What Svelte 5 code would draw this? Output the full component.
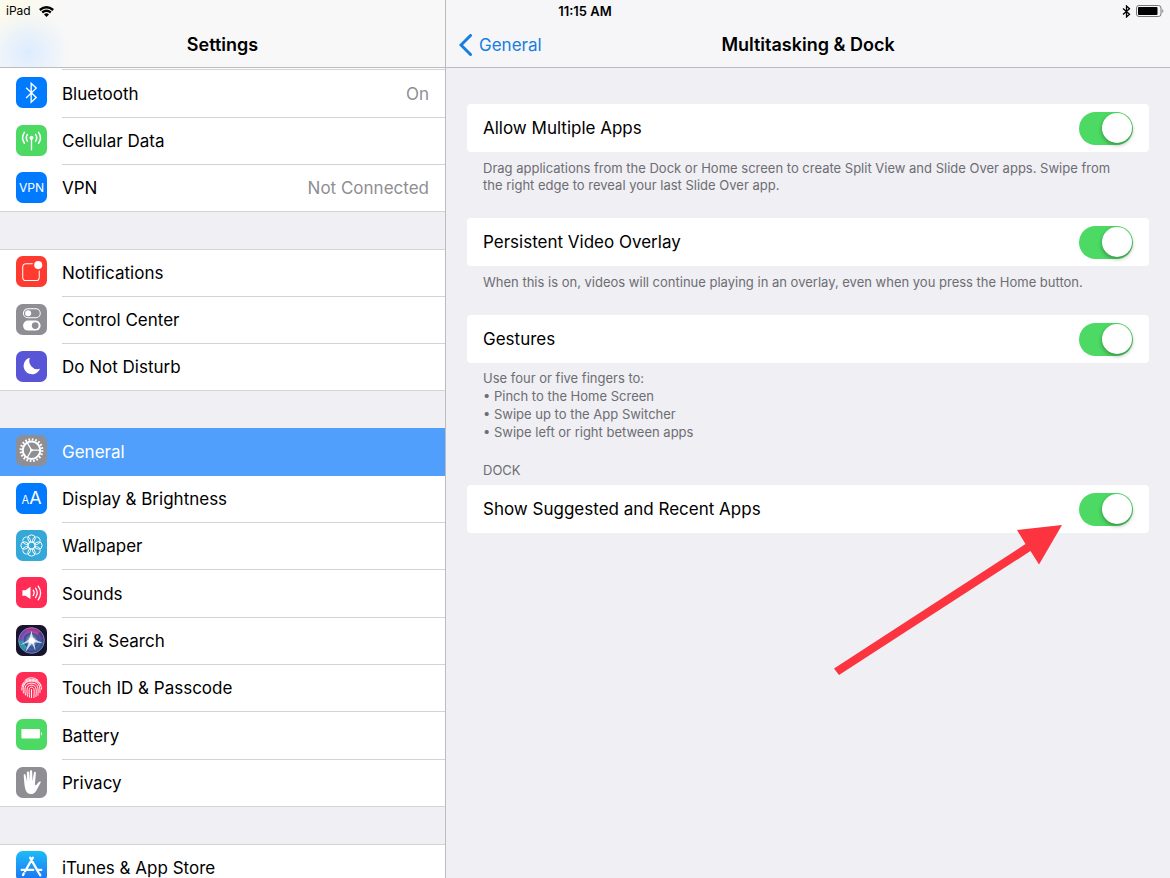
<script>
  const groups = [
    [
      { icon: 'bluetooth', label: 'Bluetooth', value: 'On', color: '#007aff' },
      { icon: 'cellular', label: 'Cellular Data', color: '#4cd964' },
      { icon: 'vpn', label: 'VPN', value: 'Not Connected', color: '#007aff' }
    ],
    [
      { icon: 'notifications', label: 'Notifications', color: '#ff3b30' },
      { icon: 'control', label: 'Control Center', color: '#8e8e93' },
      { icon: 'moon', label: 'Do Not Disturb', color: '#5856d6' }
    ],
    [
      { icon: 'gear', label: 'General', color: '#8e8e93', selected: true },
      { icon: 'display', label: 'Display & Brightness', color: '#007aff' },
      { icon: 'wallpaper', label: 'Wallpaper', color: '#34a8d8' },
      { icon: 'sounds', label: 'Sounds', color: '#ff2d55' },
      { icon: 'siri', label: 'Siri & Search', color: '#17142e' },
      { icon: 'touch', label: 'Touch ID & Passcode', color: '#ff2d55' },
      { icon: 'battery', label: 'Battery', color: '#4cd964' },
      { icon: 'hand', label: 'Privacy', color: '#8e8e93' }
    ],
    [{ icon: 'store', label: 'iTunes & App Store', color: 'url(#store-fill)' }]
  ];

  const petals = [0, 45, 90, 135, 180, 225, 270, 315];

  let multiple = $state(true);
  let overlay = $state(true);
  let gestures = $state(true);
  let suggested = $state(true);
</script>

<svelte:head><title>Settings</title></svelte:head>

{#snippet glyph(name)}
  {#if name === 'bluetooth'}
    <path d="M30 32 60 61 45 75V19L60 33 30 62" fill="none" stroke="#fff" stroke-width="4" />
  {:else if name === 'cellular'}
    <circle cx="46" cy="38" r="6" fill="#fff" />
    <path d="M46 40V75" stroke="#fff" stroke-width="4" />
    <g fill="none" stroke="#fff" stroke-width="4.5" stroke-linecap="round">
      <path d="M34 28Q27 38 34 48M58 28Q65 38 58 48M25 22Q14 38 25 54M67 22Q78 38 67 54" />
    </g>
  {:else if name === 'vpn'}
    <text x="46" y="59" font-size="36" text-anchor="middle" fill="#fff">VPN</text>
  {:else if name === 'notifications'}
    <rect x="20" y="23" width="49" height="50" rx="10" fill="none" stroke="#fff" stroke-width="3" />
    <circle cx="66" cy="27" r="17" fill="#ff3b30" />
    <circle cx="66" cy="27" r="12" fill="#fff" />
  {:else if name === 'control'}
    <rect x="22" y="14" width="50" height="27" rx="13.5" fill="none" stroke="#fff" stroke-width="3" />
    <circle cx="36" cy="27.5" r="9" fill="#fff" />
    <rect x="21" y="49" width="52" height="30" rx="15" fill="#fff" />
    <circle cx="57" cy="64" r="10" fill="#8e8e93" />
  {:else if name === 'moon'}
    <path d="M41 20A25 25 0 1 0 71 53A25 25 0 0 1 41 20Z" fill="#fff" />
  {:else if name === 'gear'}
    <circle cx="46" cy="45" r="32" fill="none" stroke="#fff" stroke-width="7" stroke-dasharray="5 5.05" />
    <circle cx="46" cy="45" r="26" fill="none" stroke="#fff" stroke-width="6" />
    <path d="M46 45H72M46 45 33 22M46 45 33 68" stroke="#fff" stroke-width="3.5" />
    <circle cx="46" cy="45" r="4" fill="#fff" />
  {:else if name === 'display'}
    <text x="16" y="61" font-size="33" fill="#fff">A</text>
    <text x="39" y="61" font-size="53" fill="#fff">A</text>
  {:else if name === 'wallpaper'}
    <g fill="none" stroke="#fff" stroke-width="2.8">
      {#each petals as angle}
        <circle cx="46" cy="25.5" r="11" transform="rotate({angle} 46 46)" />
      {/each}
      <circle cx="46" cy="46" r="11" />
    </g>
  {:else if name === 'sounds'}
    <path d="M19 39H28L43 29V65L28 56H19Z" fill="#fff" />
    <path d="M51 39Q57 47 51 55M58 33Q68 47 58 61M66 27Q80 47 66 68" fill="none" stroke="#fff" stroke-width="3.8" stroke-linecap="round" />
  {:else if name === 'siri'}
    <circle cx="46" cy="46" r="39" fill="#25214f" />
    <g fill="none" stroke-width="15">
      <path d="M15 47A31 31 0 0 1 35 17" stroke="#8b4cc6" />
      <path d="M30 19A31 31 0 0 1 69 26" stroke="#d53593" />
      <path d="M68 24A31 31 0 0 1 77 50" stroke="#593b95" />
      <path d="M77 48A31 31 0 0 1 57 75" stroke="#265f95" />
      <path d="M57 75A31 31 0 0 1 27 70" stroke="#3b4e9c" />
      <path d="M29 72A31 31 0 0 1 15 46" stroke="#20b9bd" />
    </g>
    <circle cx="46" cy="46" r="38" fill="url(#siri-glow)" />
    <path d="M46 17 51 40 80 54 54 51 58 77 47 54 27 82 38 51 13 59 39 42Z" fill="#d7efff" fill-opacity=".9" />
    <circle cx="47" cy="46" r="9" fill="#fff" />
    <circle cx="46" cy="46" r="38" fill="none" stroke="#a596ba" stroke-width="2" />
  {:else if name === 'touch'}
    <g fill="none" stroke="#fff" stroke-width="2.8" stroke-linecap="round">
      <path d="M27 24Q46 9 65 24M18 40C25 15 67 15 74 40M17 53C16 15 76 15 76 51M22 62C20 49 20 27 46 27C71 27 72 47 71 61M28 68C26 55 22 33 46 33C69 33 66 53 65 69M34 72C33 61 28 39 46 39C64 39 60 60 59 73M40 75C40 65 35 45 46 45C58 45 53 65 53 76M46 52V76" />
    </g>
  {:else if name === 'battery'}
    <rect x="16" y="30" width="55" height="28" rx="3" fill="#fff" />
    <path d="M74 38Q80 44 74 50Z" fill="#fff" />
  {:else if name === 'hand'}
    <path d="M34 77C27 70 27 62 25 52L23 27Q22 22 25 21Q28 21 29 26L33 44 32 17Q32 13 35 13Q39 13 39 17L41 42V14Q41 10 45 10Q48 10 48 14L49 42 53 18Q54 13 57 14Q60 15 59 20L56 52 59 55 67 45Q71 41 74 44Q73 48 70 52L62 67Q57 79 48 80Q39 81 34 77Z" fill="#fff" />
  {:else if name === 'store'}
    <g fill="none" stroke="#fff" stroke-width="7" stroke-linecap="round">
      <path d="M50 20 27 60M42 20 66 62M17 56H51M63 56H75M23 67 21 71M69 67 72 72" />
    </g>
  {/if}
{/snippet}

{#snippet settingSwitch(id, label, get, set)}
  <div class="card">
    <label for={id}>{label}</label>
    <input {id} type="checkbox" role="switch" checked={get()} onchange={(e) => set(e.currentTarget.checked)} />
  </div>
{/snippet}

<svg class="defs" width="0" height="0" aria-hidden="true">
  <defs>
    <linearGradient id="store-fill" x1="0" y1="0" x2="0" y2="1">
      <stop offset="0" stop-color="#1cbcf8" />
      <stop offset="1" stop-color="#1d6ff2" />
    </linearGradient>
    <radialGradient id="siri-glow">
      <stop offset="0" stop-color="#fff" stop-opacity=".9" />
      <stop offset=".5" stop-color="#78a6ef" stop-opacity=".4" />
      <stop offset="1" stop-color="#20205e" stop-opacity=".3" />
    </radialGradient>
  </defs>
</svg>

<div class="app">
  <div class="status">
    <div class="carrier">
      <span>iPad</span>
      <svg width="15" height="11" viewBox="0 0 15 11" aria-hidden="true">
        <path d="M.8 4Q7.500-1.500 14.200 4M3.200 6.500Q7.500 3 11.800 6.500" fill="none" stroke="#000" stroke-width="2.400" />
        <path d="M5 8.400Q7.500 6.300 10 8.400L7.500 11Z" />
      </svg>
    </div>
    <time>11:15 AM</time>
    <div class="power">
      <svg width="9" height="13" viewBox="0 0 9 13" aria-hidden="true">
        <path d="M1 3.500 7.500 9.300 4.500 12V1L7.500 3.700 1 9.500" fill="none" stroke="#000" stroke-width="1.300" />
      </svg>
      <svg width="28" height="12" viewBox="0 0 28 12" aria-hidden="true">
        <rect x=".5" y=".5" width="24.500" height="11" rx="2.500" fill="none" stroke="#777" />
        <rect x="2" y="2" width="19.500" height="8" rx="1" />
        <path d="M26.300 4Q28.500 6 26.300 8Z" fill="#777" />
      </svg>
    </div>
  </div>

  <aside class="sidebar">
    <header class="bar side-bar"><h1>Settings</h1></header>
    <nav aria-label="Settings">
      {#each groups as group}
        <ul>
          {#each group as item}
            <li>
              <a href="#{item.icon}" class:selected={item.selected} aria-current={item.selected ? 'page' : undefined}>
                <svg class="icon" viewBox="0 0 92 92" aria-hidden="true">
                  <rect width="92" height="92" rx="20" fill={item.color} />
                  {@render glyph(item.icon)}
                </svg>
                <span class="line">
                  <span>{item.label}</span>
                  {#if item.value}<span class="value">{item.value}</span>{/if}
                </span>
              </a>
            </li>
          {/each}
        </ul>
      {/each}
    </nav>
  </aside>

  <main class="detail">
    <header class="bar detail-bar">
      <a class="back" href="#general">
        <svg width="13" height="22" viewBox="0 0 13 22" aria-hidden="true">
          <path d="M11.500 1.500 2 11 11.500 20.500" fill="none" stroke="currentColor" stroke-width="3" stroke-linecap="round" />
        </svg>
        General
      </a>
      <h2>Multitasking &amp; Dock</h2>
    </header>

    <div class="content">
      <section>
        {@render settingSwitch('multiple', 'Allow Multiple Apps', () => multiple, (v) => (multiple = v))}
        <p>Drag applications from the Dock or Home screen to create Split View and Slide Over apps. Swipe from the right edge to reveal your last Slide Over app.</p>
      </section>
      <section>
        {@render settingSwitch('overlay', 'Persistent Video Overlay', () => overlay, (v) => (overlay = v))}
        <p>When this is on, videos will continue playing in an overlay, even when you press the Home button.</p>
      </section>
      <section>
        {@render settingSwitch('gestures', 'Gestures', () => gestures, (v) => (gestures = v))}
        <div class="hints">
          <div>Use four or five fingers to:</div>
          <div>• Pinch to the Home Screen</div>
          <div>• Swipe up to the App Switcher</div>
          <div>• Swipe left or right between apps</div>
        </div>
      </section>
      <section class="dock">
        <h3>DOCK</h3>
        {@render settingSwitch('suggested', 'Show Suggested and Recent Apps', () => suggested, (v) => (suggested = v))}
        <svg class="arrow" width="228" height="151" viewBox="0 0 228 151" aria-hidden="true">
          <path d="M0 144.500 191.500 20 183 6 228 1 205 40.500 196.500 27 5 151Z" fill="#fc3440" />
        </svg>
      </section>
    </div>
  </main>
</div>

<style>
  :global(body) {
    margin: 0;
  }

  .app {
    position: relative;
    display: grid;
    grid-template-columns: 446px 1fr;
    height: 100vh;
    overflow: hidden;
    background: #efeff4;
    color: #000;
    font-family: Inter, 'Liberation Sans', sans-serif;
    font-size: 17px;
    line-height: 22px;
  }

  .defs {
    position: absolute;
  }

  h1,
  h2,
  h3,
  p,
  ul {
    margin: 0;
    padding: 0;
  }

  .status {
    position: absolute;
    inset: 0 0 auto;
    display: grid;
    grid-template-columns: 1fr auto 1fr;
    align-items: center;
    height: 22px;
    padding: 0 6px;
    font-size: 12px;
    z-index: 1;
  }

  time {
    font-size: 13px;
    font-weight: 600;
  }

  .carrier,
  .power {
    display: flex;
    align-items: center;
    gap: 8px;
  }

  .power {
    justify-content: flex-end;
    gap: 5px;
  }

  .bar {
    box-sizing: border-box;
    flex: none;
    height: 68px;
    padding-top: 22px;
    border-bottom: 1px solid #bcbcc0;
    background: #f6f6f8;
  }

  h1,
  h2 {
    font-size: 18px;
    font-weight: 600;
    line-height: 45px;
    text-align: center;
  }

  .sidebar {
    display: flex;
    flex-direction: column;
    min-height: 0;
    border-right: 1px solid #bcbcc0;
  }

  .side-bar {
    background:
      radial-gradient(circle at 28px 52px, #dcecfe 0, #dcecfe00 42px),
      radial-gradient(circle at 8px 0, #fdfae9 0, #fdfae900 60px),
      #f8f8f8;
  }

  nav {
    display: flex;
    flex-direction: column;
    gap: 37px;
    min-height: 0;
    overflow-y: auto;
    scrollbar-width: none;
  }

  ul {
    display: grid;
    flex: none;
    grid-auto-rows: 48px 47px 47px;
    background: #fff;
    box-shadow: inset 0 1px #d3d3d7;
    list-style: none;
  }

  ul:first-child {
    padding-top: 2px;
    box-shadow: none;
  }

  ul:first-child li:first-child {
    box-shadow: inset 62px 0 #fff, 62px -1px #d3d3d7;
  }

  li a {
    display: flex;
    gap: 15px;
    height: 100%;
    padding-left: 16px;
    color: inherit;
    text-decoration: none;
  }

  .icon {
    flex: none;
    width: 31px;
    height: 31px;
    margin-top: 7px;
  }

  .line {
    box-sizing: border-box;
    display: flex;
    flex: 1;
    align-items: center;
    justify-content: space-between;
    height: 100%;
    padding-right: 16px;
    border-bottom: 1px solid #d3d3d7;
  }

  li:last-child a {
    box-shadow: inset 0 -1px #d3d3d7;
  }

  .value {
    color: #8e8e93;
  }

  .selected {
    background: #509ffc;
    color: #fff;
  }

  .selected .line {
    border-color: #509ffc;
  }

  .detail-bar {
    display: grid;
    grid-template-columns: 1fr auto 1fr;
    align-items: center;
  }

  .back {
    display: flex;
    gap: 7px;
    align-items: center;
    padding-left: 13px;
    color: #167de2;
    text-decoration: none;
  }

  .content {
    padding: 36px 21px;
  }

  section {
    position: relative;
  }

  .card {
    display: flex;
    align-items: center;
    justify-content: space-between;
    height: 48px;
    padding: 0 16px;
    border-radius: 4px;
    background: #fff;
  }

  input {
    appearance: none;
    flex: none;
    width: 54px;
    height: 33px;
    margin: 0;
    border-radius: 17px;
    background: #d8d8dc;
  }

  input::before {
    content: '';
    display: block;
    width: 30px;
    height: 30px;
    margin: 1px;
    border-radius: 50%;
    background: #fff;
    box-shadow: 0 2px 4px #0005;
  }

  input:checked {
    background: #4cd964;
  }

  input:checked::before {
    margin-left: 23px;
  }

  p,
  .hints,
  h3 {
    color: #6d6d72;
    font-size: 13px;
    font-weight: 400;
    line-height: 17px;
  }

  p {
    padding: 8px 16px 24px;
  }

  .hints {
    padding: 6px 16px 21px;
    line-height: 18px;
  }

  h3 {
    padding: 0 16px 6px;
  }

  .arrow {
    position: absolute;
    top: 62px;
    right: 87px;
  }
</style>
